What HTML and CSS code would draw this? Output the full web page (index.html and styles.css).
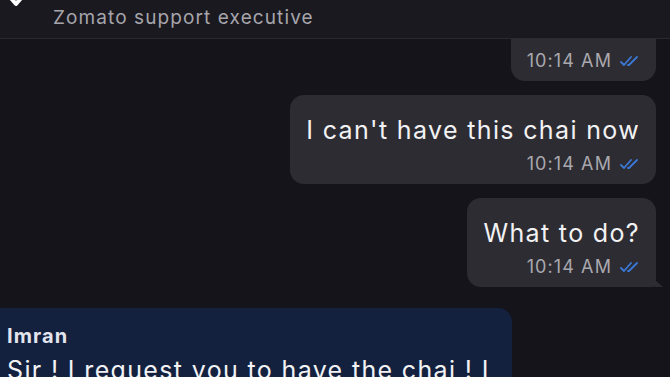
FILE: index.html
```html
<!DOCTYPE html>
<html>
<head>
<meta charset="utf-8">
<title>Chat</title>
<link rel="stylesheet" href="styles.css">
</head>
<body>
  <div class="header">
    <svg class="back" width="18" height="10" viewBox="0 0 18 10"><path d="M3 -3 L9 4 L15 -3" fill="none" stroke="#fff" stroke-width="4" stroke-linecap="round" stroke-linejoin="round"/></svg>
    <div class="sub">Zomato support executive</div>
  </div>
  <div class="chat">
    <div class="msg out first">
      <div class="text">Hi</div>
      <div class="meta"><span>10:14 AM</span><svg class="tick" width="20" height="12" viewBox="0 0 20 12"><path d="M1 7 L4 10 L11 2 M8 10 L9 10 L17 2" fill="none" stroke="#3b78d6" stroke-width="1.8" stroke-linecap="round" stroke-linejoin="round"/></svg></div>
    </div>
    <div class="msg out">
      <div class="text">I can't have this chai now</div>
      <div class="meta"><span>10:14 AM</span><svg class="tick" width="20" height="12" viewBox="0 0 20 12"><path d="M1 7 L4 10 L11 2 M8 10 L9 10 L17 2" fill="none" stroke="#3b78d6" stroke-width="1.8" stroke-linecap="round" stroke-linejoin="round"/></svg></div>
    </div>
    <div class="msg out tail">
      <div class="text">What to do?</div>
      <div class="meta"><span>10:14 AM</span><svg class="tick" width="20" height="12" viewBox="0 0 20 12"><path d="M1 7 L4 10 L11 2 M8 10 L9 10 L17 2" fill="none" stroke="#3b78d6" stroke-width="1.8" stroke-linecap="round" stroke-linejoin="round"/></svg></div>
    </div>
    <div class="msg in">
      <div class="name">Imran</div>
      <div class="text">Sir ! I request you to have the chai ! I</div>
    </div>
  </div>
</body>
</html>
```
FILE: styles.css
```css
body {margin: 0; background: #15141a; font-family: Inter, "Noto Sans", sans-serif; color: #f2f2f4; height: 377px; overflow: hidden;}
.header {position: relative; z-index: 2; height: 38px; background: #1a1920; border-bottom: 1px solid #2b2a31; display: flex; align-items: center;}
.back {position: absolute; left: 7px; top: 0;}
.sub {margin-left: 53px; margin-top: -4px; font-size: 19px; color: #a6a5ab; letter-spacing: 1.1px;}
.chat {display: flex; flex-direction: column; align-items: flex-end; padding-right: 14px;}
.msg {background: #2d2c32; border-radius: 14px; padding: 20px 16px 9px; margin-top: 14px; position: relative;}
.msg.first {margin-top: -47px;}
.text {font-size: 25px; line-height: 30px; letter-spacing: 1.35px;}
.meta {display: flex; justify-content: flex-end; align-items: center; gap: 8px; margin-top: 6px; height: 24px; font-size: 18px; color: #a9a8ae; letter-spacing: 1.1px;}
.tick {margin-top: 1px;}
.msg.tail {border-bottom-right-radius: 4px;}
.msg.tail::after {content: ""; position: absolute; right: -7px; bottom: 0; border-left: 8px solid #2d2c32; border-top: 7px solid transparent;}
.msg.in {align-self: flex-start; background: #13213e; margin-top: 21px; width: 497px; padding: 17px 8px 12px 7px; border-radius: 0 14px 14px 0;}
.name {font-size: 20px; font-weight: 700; color: #e2e5ee; line-height: 22px; letter-spacing: 1.1px;}
.msg.in .text {margin-top: 8px; white-space: nowrap;}
```
